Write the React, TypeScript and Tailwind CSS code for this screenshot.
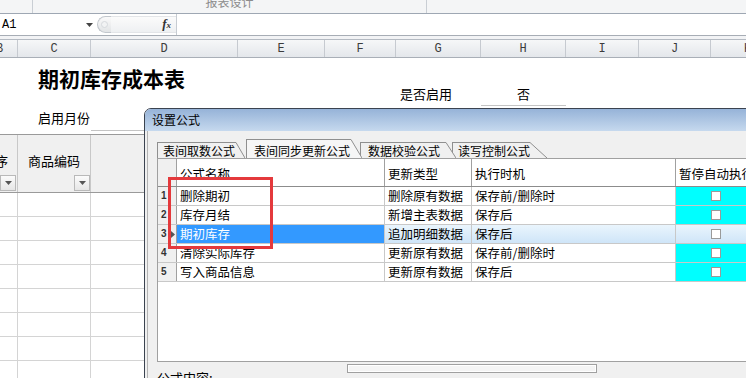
const sheetCols = [
  { label: 'B', cls: 'w-[18px]' },
  { label: 'C', cls: 'w-[73px]' },
  { label: 'D', cls: 'w-[147px]' },
  { label: 'E', cls: 'w-[87px]' },
  { label: 'F', cls: 'w-[71px]' },
  { label: 'G', cls: 'w-[85px]' },
  { label: 'H', cls: 'w-[85px]' },
  { label: 'I', cls: 'w-[73px]' },
  { label: 'J', cls: 'w-[72px]' },
  { label: 'K', cls: 'w-[74px]' },
];

const formulas = [
  { name: '删除期初', type: '删除原有数据', when: '保存前/删除时' },
  { name: '库存月结', type: '新增主表数据', when: '保存后' },
  { name: '期初库存', type: '追加明细数据', when: '保存后', selected: true },
  { name: '清除实际库存', type: '更新原有数据', when: '保存前/删除时' },
  { name: '写入商品信息', type: '更新原有数据', when: '保存后' },
];

function Slant({ w, h, fill }: { w: number; h: number; fill: string }) {
  return (
    <svg width={w} height={h} className="absolute left-full top-[-1px]" viewBox={`0 0 ${w} ${h}`}>
      <polygon points={`0,0 ${w},${h} 0,${h}`} fill={fill} />
      <line x1="0" y1="0.5" x2={w} y2={h} stroke="#8f8f8f" strokeWidth="1" />
    </svg>
  );
}

function Checkbox() {
  return <div className="w-[10px] h-[10px] border border-[#9a9a9a] bg-white" />;
}

function FilterButton() {
  return (
    <div className="w-[16px] h-[16px] border border-[#b9b9b9] bg-gradient-to-b from-[#fbfbfb] to-[#e6e6e6] flex items-center justify-center">
      <svg width="7" height="4" viewBox="0 0 7 4">
        <polygon points="0,0 7,0 3.5,4" fill="#555" />
      </svg>
    </div>
  );
}

export default function App() {
  return (
    <div className="relative w-[746px] h-[378px] overflow-hidden bg-white text-black font-['Noto_Sans_CJK_SC','Liberation_Sans',sans-serif]">
      {/* ribbon edge */}
      <div className="flex h-[14px] bg-[#f4f5f6] border-b border-[#9ea7b3]">
        <div className="w-[33px] border-r border-[#c9ced4]" />
        <div className="w-[394px] border-r border-[#c9ced4] overflow-hidden text-center">
          <div className="-mt-[6px] text-[12px] leading-[16px] text-[#8c8c8c]">报表设计</div>
        </div>
      </div>

      {/* formula bar */}
      <div className="flex h-[22px] border-b border-[#a7adb5] bg-white">
        <div className="w-[97px] flex items-center justify-between pl-[2px] pr-[4px]">
          <span className="font-['Liberation_Mono',monospace] text-[12px] leading-[14px]">A1</span>
          <svg width="7" height="4" viewBox="0 0 7 4">
            <polygon points="0,0 7,0 3.5,4" fill="#444" />
          </svg>
        </div>
        <div className="w-[79px] flex items-center">
          <div className="w-[14px] h-[17px] rounded-l-full border-l border-y border-[#c2c7cd] bg-gradient-to-b from-[#fafafa] to-[#e2e4e6] flex items-center pl-[3px]">
            <div className="w-[7px] h-[7px] rounded-full border border-[#d6d9dd] bg-[#f2f3f4]" />
          </div>
          <div className="flex-1 h-[17px] border-y border-[#e3e5e8] bg-gradient-to-b from-[#fbfbfb] to-[#eef0f2] flex items-center justify-end pr-[5px]">
            <span className="font-['Liberation_Serif',serif] italic font-bold text-[13px] leading-[14px] text-[#333]">
              f<span className="text-[9px]">x</span>
            </span>
          </div>
        </div>
        <div className="flex-1 border-l border-[#c7ccd2]" />
      </div>
      <div className="h-[4px] bg-[#f2f3f5] border-b border-[#b4bac2]" />

      {/* column letters */}
      <div className="flex h-[18px] bg-gradient-to-b from-[#f6f7f8] to-[#e4e7eb] border-b border-[#a9afb7]">
        {sheetCols.map((c, i) => (
          <div
            key={c.label}
            className={`${c.cls} shrink-0 border-r border-[#c6cad0] overflow-hidden flex items-center ${i === 0 ? 'justify-start' : 'justify-center'} font-['Liberation_Mono',monospace] text-[12px] leading-[14px] text-[#3c3c3c]`}
          >
            <span className={i === 0 ? '-ml-[4px]' : ''}>{c.label}</span>
          </div>
        ))}
      </div>

      {/* sheet body */}
      <div className="flex h-[48px]">
        <div className="w-[396px] pl-[38px] pt-[8px]">
          <div className="text-[21px] font-bold leading-[24px]">期初库存成本表</div>
        </div>
        <div className="w-[85px] pt-[27px] pl-[4px] text-[13px] leading-[18px]">是否启用</div>
        <div className="w-[85px] pt-[27px] text-center text-[13px] leading-[18px] border-b border-[#c4c4c4]">否</div>
      </div>
      <div className="flex h-[25px]">
        <div className="w-[91px] pl-[38px] pt-[3px] text-[13px] leading-[18px] whitespace-nowrap">启用月份</div>
        <div className="w-[147px] border-b border-[#c4c4c4]" />
      </div>
      <div className="h-[3px]" />
      <div className="flex h-[59px] border-y border-[#9a9a9a] bg-[#f0f0f0]">
        <div className="w-[18px] shrink-0 border-r border-[#c8c8c8] overflow-hidden flex flex-col justify-between">
          <div className="pt-[17px] text-[13px] leading-[18px] -ml-[5px]">序</div>
          <div className="mb-[1px]">
            <FilterButton />
          </div>
        </div>
        <div className="w-[73px] shrink-0 border-r border-[#c8c8c8] flex flex-col justify-between">
          <div className="pt-[17px] text-[13px] leading-[18px] text-center">商品编码</div>
          <div className="mb-[1px] self-end">
            <FilterButton />
          </div>
        </div>
        <div className="w-[147px] shrink-0 border-r border-[#c8c8c8]" />
        <div className="flex-1" />
      </div>
      {Array.from({ length: 8 }).map((_, i) => (
        <div key={i} className="flex h-[24px] border-b border-[#d4d4d4]">
          <div className="w-[18px] shrink-0 border-r border-[#d4d4d4]" />
          <div className="w-[73px] shrink-0 border-r border-[#d4d4d4]" />
          <div className="w-[147px] shrink-0 border-r border-[#d4d4d4]" />
        </div>
      ))}

      {/* dialog */}
      <div className="absolute left-[144px] top-[108px] w-[640px] h-[290px] border border-[#3b4350] rounded-tl-[7px] overflow-hidden bg-[#f0f0f0] flex flex-col">
        <div className="h-[22px] shrink-0 bg-gradient-to-b from-[#96b3d8] to-[#c6d9ee] pl-[7px] text-[12px] leading-[22px]">设置公式</div>
        <div className="flex-1 ml-[2px] border-l border-[#b3b3b3] pl-[9px] pt-[7px]">
          {/* tabs */}
          <div className="flex items-end h-[20px] text-[12px]">
            <div className="relative z-40 w-[79px] h-[16px] border-l border-t border-[#8f8f8f] bg-[#f0f0f0] pl-[5px] leading-[15px] whitespace-nowrap">
              表间取数公式
              <Slant w={9} h={16} fill="#f0f0f0" />
            </div>
            <div className="relative z-50 ml-[10px] w-[105px] h-[19px] border-l border-t border-[#8f8f8f] bg-[#f6f6f6] pl-[7px] pt-[3px] leading-[15px] whitespace-nowrap">
              表间同步更新公式
              <Slant w={11} h={19} fill="#f6f6f6" />
            </div>
            <div className="relative z-30 ml-[9px] w-[86px] h-[16px] border-l border-t border-[#8f8f8f] bg-[#f0f0f0] pl-[7px] leading-[15px] whitespace-nowrap">
              数据校验公式
              <Slant w={10} h={16} fill="#f0f0f0" />
            </div>
            <div className="relative z-20 ml-[6px] w-[78px] h-[16px] border-l border-t border-[#8f8f8f] bg-[#f0f0f0] pl-[5px] leading-[15px] whitespace-nowrap">
              读写控制公式
              <Slant w={17} h={16} fill="#f0f0f0" />
            </div>
          </div>

          {/* grid */}
          <div className="w-[620px] h-[204px] border border-[#a0a0a0] bg-white flex flex-col text-[12.5px]">
            <div className="flex h-[28px] shrink-0 border-b border-[#8c8c8c]">
              <div className="w-[19px] shrink-0 border-r border-[#a0a0a0] bg-[#f0f0f0]" />
              <div className="w-[208px] shrink-0 border-r border-[#a0a0a0] pl-[3px] pt-[4px] flex items-center">公式名称</div>
              <div className="w-[87px] shrink-0 border-r border-[#a0a0a0] pl-[3px] pt-[4px] flex items-center">更新类型</div>
              <div className="w-[204px] shrink-0 border-r border-[#a0a0a0] pl-[3px] pt-[4px] flex items-center">执行时机</div>
              <div className="w-[90px] shrink-0 pl-[3px] pt-[4px] flex items-center whitespace-nowrap">暂停自动执行</div>
            </div>
            {formulas.map((f, i) => (
              <div
                key={f.name}
                className={`flex h-[19px] shrink-0 border-b border-[#c8c8c8] leading-[18px] ${f.selected ? 'bg-gradient-to-b from-[#eaf5fd] to-[#cfe5f8]' : ''}`}
              >
                <div className="w-[19px] shrink-0 border-r border-[#a0a0a0] bg-[#f0f0f0] flex items-center justify-between pl-[3px] pr-[1px] font-['Liberation_Sans',sans-serif] text-[10px] font-bold text-[#333]">
                  {i + 1}
                  {f.selected && (
                    <svg width="4" height="7" viewBox="0 0 4 7">
                      <polygon points="0,0 4,3.5 0,7" fill="#555" />
                    </svg>
                  )}
                </div>
                <div
                  className={`w-[208px] shrink-0 border-r border-[#c8c8c8] pl-[3px] flex items-center whitespace-nowrap ${f.selected ? 'bg-[#3399ff] text-white' : ''}`}
                >
                  {f.name}
                </div>
                <div className="w-[87px] shrink-0 border-r border-[#c8c8c8] pl-[3px] flex items-center whitespace-nowrap overflow-hidden">
                  {f.type}
                </div>
                <div className="w-[204px] shrink-0 border-r border-[#c8c8c8] pl-[3px] flex items-center whitespace-nowrap">
                  {f.when}
                </div>
                <div className={`w-[80px] shrink-0 flex items-center justify-center ${f.selected ? '' : 'bg-[#00ffff]'}`}>
                  <Checkbox />
                </div>
              </div>
            ))}
          </div>

          <div className="flex items-start">
            <div className="w-[190px] shrink-0 pt-[7px] text-[13px] leading-[18px]">公式内容:</div>
            <div className="mt-[2px] w-[250px] h-[9px] border border-[#a0a0a0] bg-[#f4f4f4] shadow-[inset_0_0_0_1px_#ffffff]" />
          </div>
        </div>
      </div>

      {/* annotation */}
      <div className="absolute left-[168px] top-[177px] w-[105px] h-[72px] border-[3px] border-[#e4393c] pointer-events-none" />
    </div>
  );
}
